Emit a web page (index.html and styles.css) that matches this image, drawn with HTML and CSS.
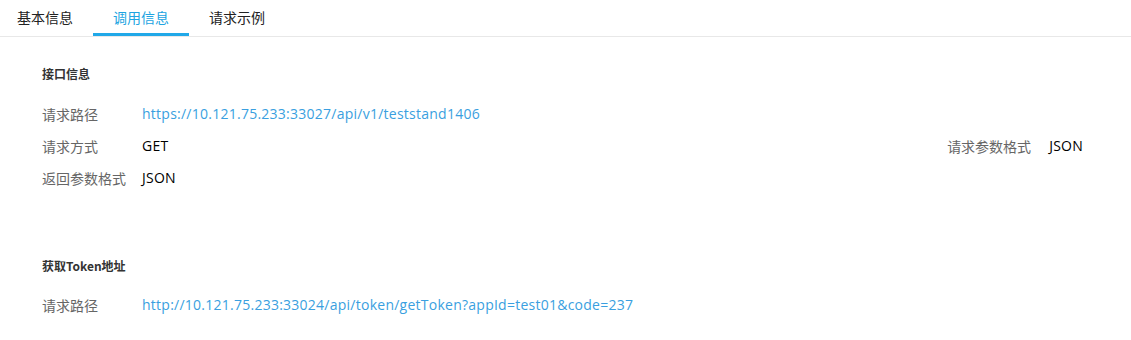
FILE: index.html
```html
<!DOCTYPE html>
<html lang="zh-CN">
<head>
    <meta charset="UTF-8">
    <title>调用信息</title>
    <link rel="stylesheet" href="styles.css">
</head>
<body>
    <div class="tabs">
        <div class="tab">基本信息</div>
        <div class="tab active">调用信息</div>
        <div class="tab">请求示例</div>
    </div>

    <div class="content">
        <div class="section">
            <div class="section-title">接口信息</div>
            <div class="row">
                <div class="item">
                    <span class="label">请求路径</span>
                    <a class="value link" href="#">https://10.121.75.233:33027/api/v1/teststand1406</a>
                </div>
            </div>
            <div class="row">
                <div class="item">
                    <span class="label">请求方式</span>
                    <span class="value">GET</span>
                </div>
                <div class="item right">
                    <span class="label">请求参数格式</span>
                    <span class="value">JSON</span>
                </div>
            </div>
            <div class="row">
                <div class="item">
                    <span class="label">返回参数格式</span>
                    <span class="value">JSON</span>
                </div>
            </div>
        </div>

        <div class="section token">
            <div class="section-title">获取Token地址</div>
            <div class="row">
                <div class="item">
                    <span class="label">请求路径</span>
                    <a class="value link" href="#">http://10.121.75.233:33024/api/token/getToken?appId=test01&amp;code=237</a>
                </div>
            </div>
        </div>
    </div>
</body>
</html>
```

FILE: styles.css
```css
body {
    margin: 0;
    background-color: #fff;
    font-family: "Noto Sans CJK SC", "Liberation Sans", sans-serif;
    font-size: 14px;
    color: #333;
}

.tabs {
    display: flex;
    height: 36px;
    border-bottom: 1px solid #e8e8e8;
    padding-left: 0;
}

.tab {
    box-sizing: border-box;
    width: 96px;
    height: 36px;
    line-height: 34px;
    text-align: center;
    color: #222;
    font-size: 14px;
    border-bottom: 3px solid transparent;
    cursor: pointer;
}

.tab:first-child {
    margin-left: -3px;
}

.tab.active {
    color: #20a3e1;
    border-bottom-color: #20a8e8;
}

.content {
    padding: 0 48px 0 42px;
}

.section {
    padding-top: 28px;
}

.section.token {
    padding-top: 58px;
}

.section-title {
    font-size: 12px;
    font-weight: bold;
    color: #333;
    line-height: 18px;
    margin-bottom: 20px;
}

.token .section-title {
    margin-bottom: 19px;
}

.row {
    display: flex;
    justify-content: space-between;
    height: 32px;
    line-height: 22px;
}

.item {
    display: flex;
}

.label {
    width: 100px;
    color: #666;
    font-size: 14px;
}

.item.right .label {
    width: 102px;
}

.value {
    color: #000;
    font-family: "Open Sans", "Noto Sans CJK SC", sans-serif;
    font-size: 14px;
    letter-spacing: 0.25px;
}

.link {
    color: #3a9fe0;
    text-decoration: none;
}
```
